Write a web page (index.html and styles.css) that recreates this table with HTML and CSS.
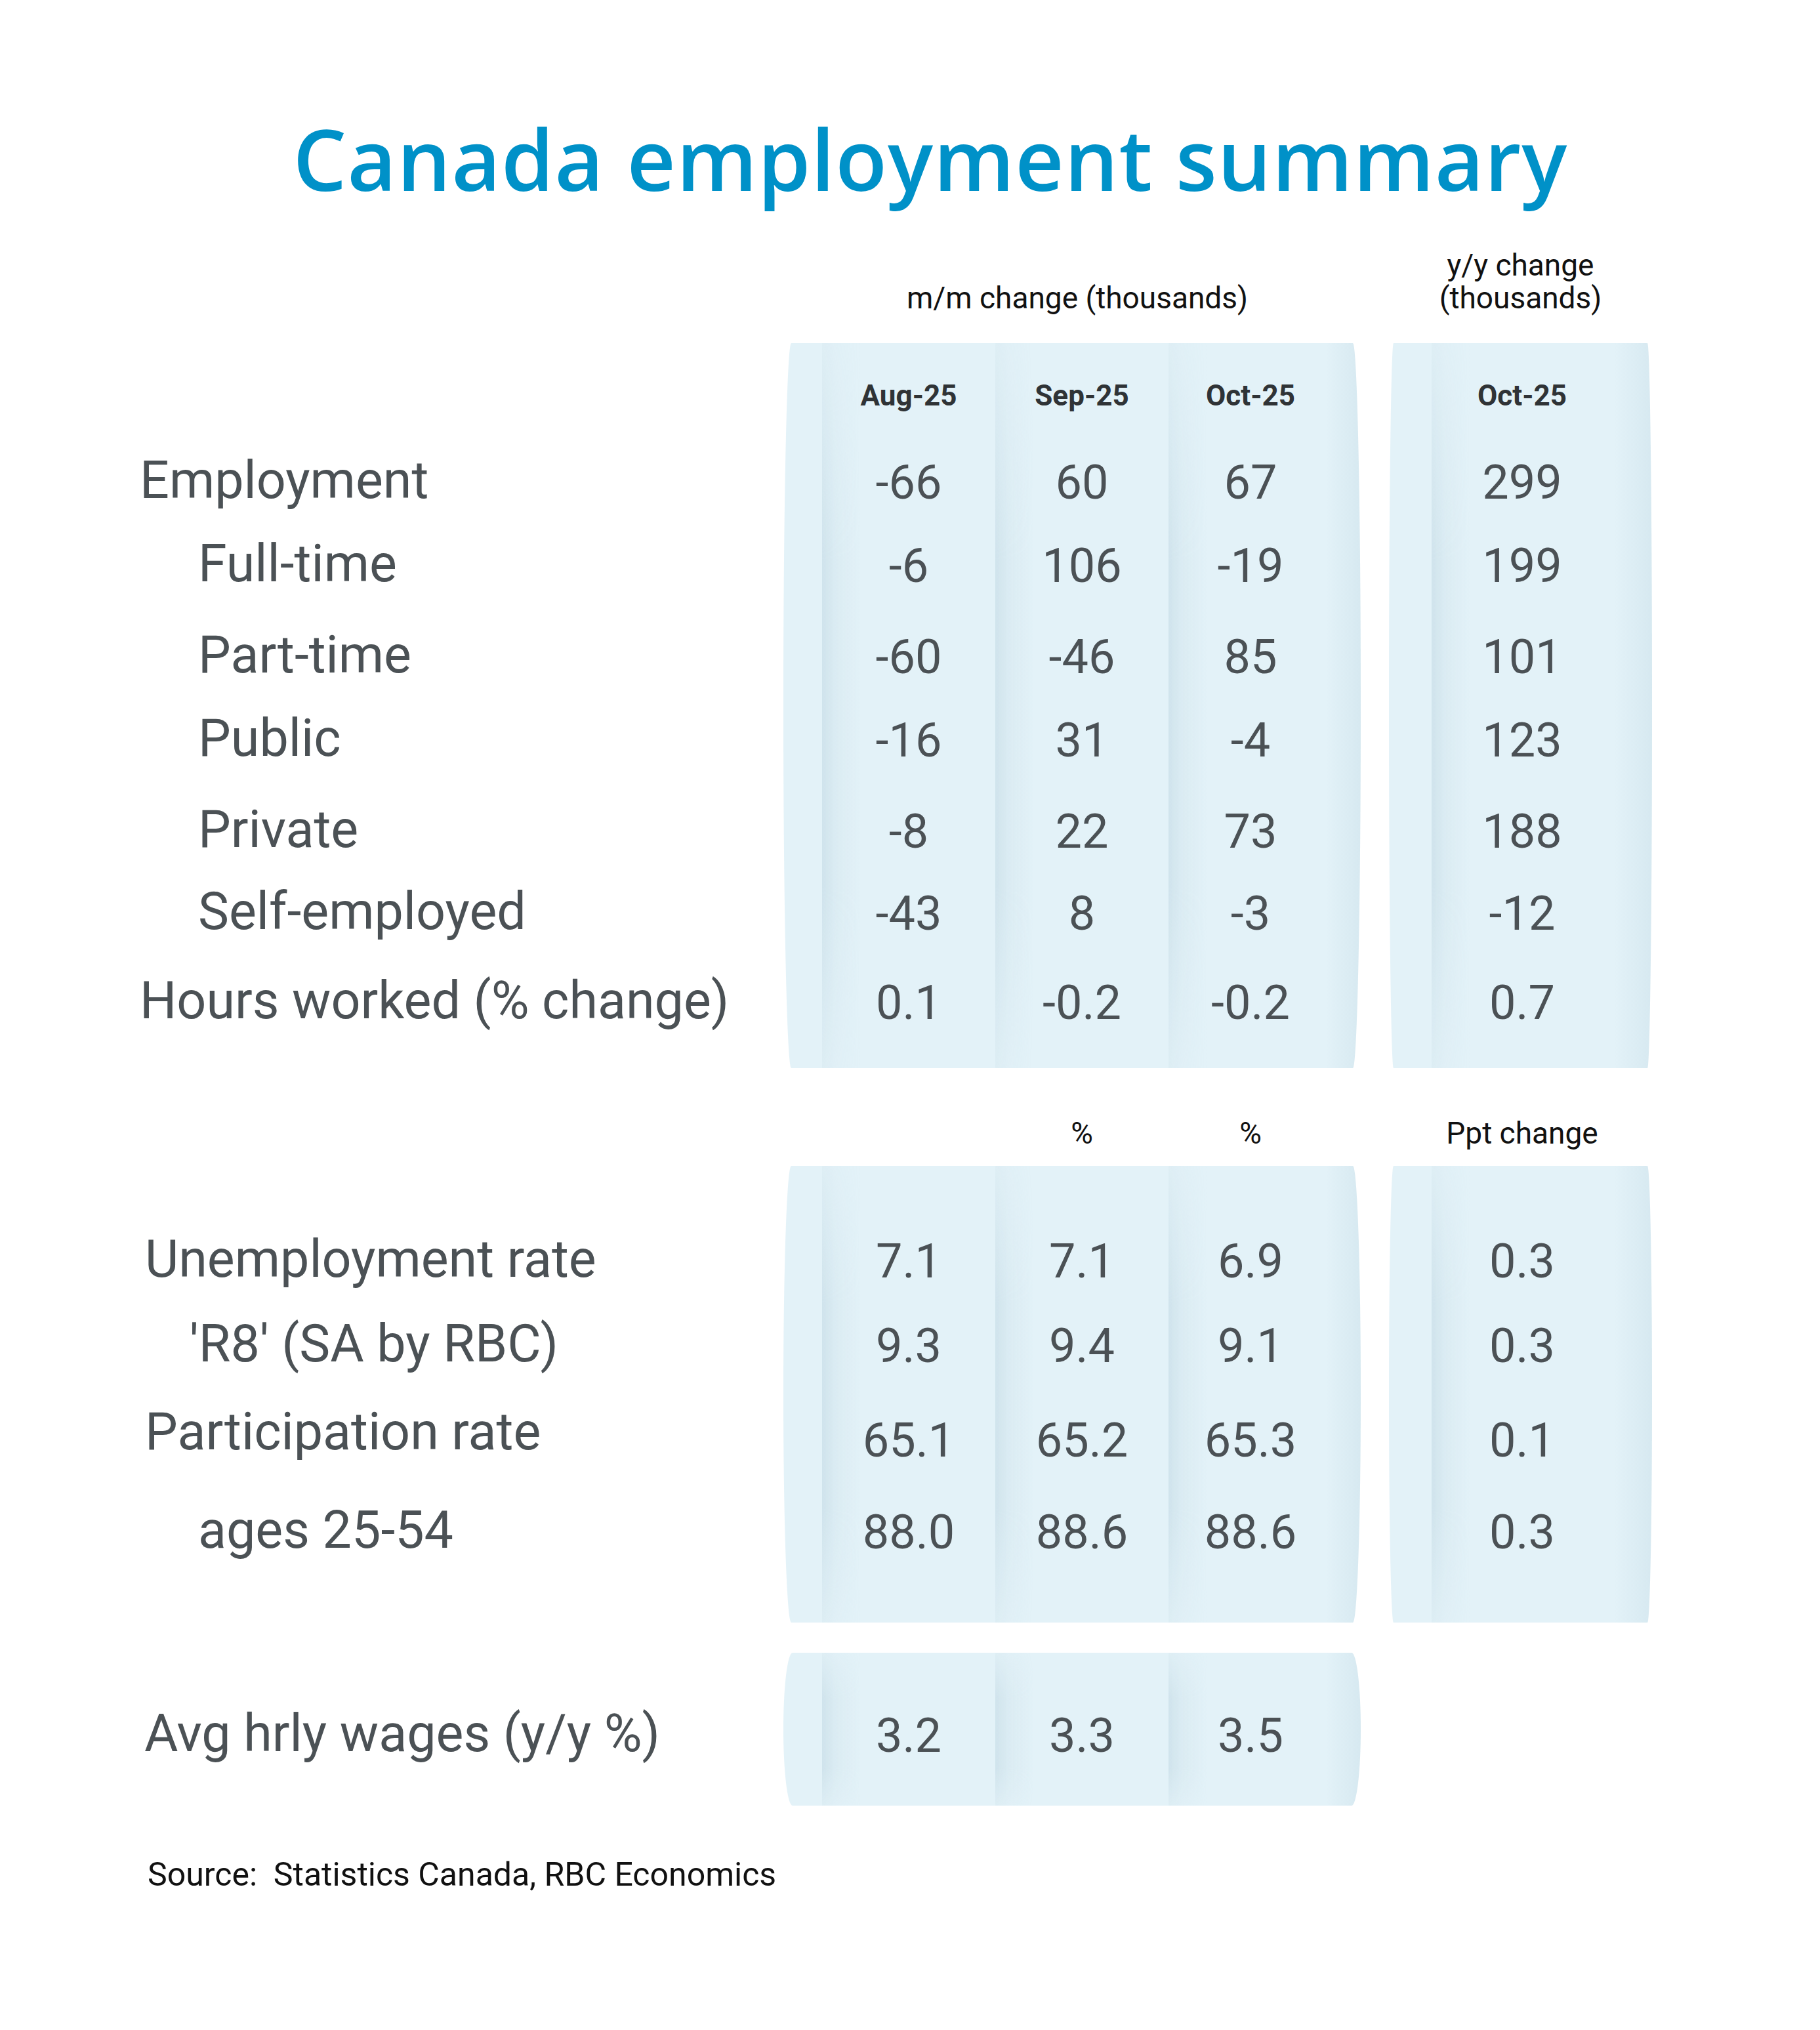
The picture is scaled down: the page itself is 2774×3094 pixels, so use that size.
FILE: index.html
```html
<!DOCTYPE html>
<html lang="en">
<head>
<meta charset="utf-8">
<title>Canada employment summary</title>
<link rel="stylesheet" href="styles.css">
</head>
<body>
<main class="page">
  <h1 class="title">Canada employment summary</h1>

  <section class="grid sec1">
    <div class="panel p-mm r-s1"></div>
    <div class="shade c1 r-s1"></div>
    <div class="shade c2 r-s1"></div>
    <div class="shade c3 r-s1"></div>
    <div class="panel p-yy r-s1"></div>
    <div class="shade c4 r-s1"></div>

    <div class="hdr h-mm">m/m change (thousands)</div>
    <div class="hdr h-yy">y/y change<br>(thousands)</div>

    <div class="mon c1 row2">Aug-25</div>
    <div class="mon c2 row2">Sep-25</div>
    <div class="mon c3 row2">Oct-25</div>
    <div class="mon c4 row2">Oct-25</div>

    <div class="lab main row3">Employment</div>
    <div class="num c1 row3">-66</div><div class="num c2 row3">60</div><div class="num c3 row3">67</div><div class="num c4 row3">299</div>

    <div class="lab sub row4">Full-time</div>
    <div class="num c1 row4">-6</div><div class="num c2 row4">106</div><div class="num c3 row4">-19</div><div class="num c4 row4">199</div>

    <div class="lab sub row5">Part-time</div>
    <div class="num c1 row5">-60</div><div class="num c2 row5">-46</div><div class="num c3 row5">85</div><div class="num c4 row5">101</div>

    <div class="lab sub row6">Public</div>
    <div class="num c1 row6">-16</div><div class="num c2 row6">31</div><div class="num c3 row6">-4</div><div class="num c4 row6">123</div>

    <div class="lab sub row7">Private</div>
    <div class="num c1 row7">-8</div><div class="num c2 row7">22</div><div class="num c3 row7">73</div><div class="num c4 row7">188</div>

    <div class="lab sub row8">Self-employed</div>
    <div class="num c1 row8">-43</div><div class="num c2 row8">8</div><div class="num c3 row8">-3</div><div class="num c4 row8">-12</div>

    <div class="lab main row9">Hours worked (% change)</div>
    <div class="num c1 row9">0.1</div><div class="num c2 row9">-0.2</div><div class="num c3 row9">-0.2</div><div class="num c4 row9">0.7</div>
  </section>

  <section class="grid sec2">
    <div class="panel p-mm r-s2"></div>
    <div class="shade c1 r-s2"></div>
    <div class="shade c2 r-s2"></div>
    <div class="shade c3 r-s2"></div>
    <div class="panel p-yy r-s2"></div>
    <div class="shade c4 r-s2"></div>

    <div class="unit c2 row1">%</div>
    <div class="unit c3 row1">%</div>
    <div class="unit c4 row1">Ppt change</div>

    <div class="lab main2 row2">Unemployment rate</div>
    <div class="num c1 row2">7.1</div><div class="num c2 row2">7.1</div><div class="num c3 row2">6.9</div><div class="num c4 row2">0.3</div>

    <div class="lab r8 row3">'R8' (SA by RBC)</div>
    <div class="num c1 row3">9.3</div><div class="num c2 row3">9.4</div><div class="num c3 row3">9.1</div><div class="num c4 row3">0.3</div>

    <div class="lab main2 raised row4">Participation rate</div>
    <div class="num c1 row4">65.1</div><div class="num c2 row4">65.2</div><div class="num c3 row4">65.3</div><div class="num c4 row4">0.1</div>

    <div class="lab ages row5">ages 25-54</div>
    <div class="num c1 row5">88.0</div><div class="num c2 row5">88.6</div><div class="num c3 row5">88.6</div><div class="num c4 row5">0.3</div>
  </section>

  <section class="grid sec3">
    <div class="panel p-wg r-s3"></div>
    <div class="shade c1 r-s3"></div>
    <div class="shade c2 r-s3"></div>
    <div class="shade c3 r-s3"></div>

    <div class="lab wage row1">Avg hrly wages (y/y %)</div>
    <div class="num c1 row1">3.2</div><div class="num c2 row1">3.3</div><div class="num c3 row1">3.5</div>
  </section>

  <p class="source">Source:&nbsp; Statistics Canada, RBC Economics</p>
</main>
</body>
</html>
```

FILE: styles.css
```css
html, body {
  margin: 0;
  padding: 0;
  background: #ffffff;
}

.page {
  width: 2774px;
  height: 3094px;
  font-family: Roboto, "Liberation Sans", Arial, sans-serif;
  color: #4b5155;
}

.title {
  margin: 0;
  padding: 177px 0 0 62px;
  font-family: "Open Sans", "Noto Sans", sans-serif;
  font-weight: 600;
  font-size: 129px;
  line-height: 1;
  letter-spacing: 1px;
  color: #0091c8;
  text-align: center;
}

.grid {
  display: grid;
  grid-template-columns: 1194px 59px 264px 264px 250px 43px 43px 65px 276px 60px 1fr;
}

.sec1 { grid-template-rows: 217px 102px 147px 127px 139px 127px 139px 125px 136px 63px; }
.sec2 { grid-template-rows: 149px 182px 129px 144px 140px 101px; }
.sec3 { grid-template-rows: 163px 70px; margin-top: 46px; }

.r-s1 { grid-row: 2 / 11; }
.r-s2 { grid-row: 2 / 7; }
.r-s3 { grid-row: 1 / 3; }

.row1 { grid-row: 1; }
.row2 { grid-row: 2; }
.row3 { grid-row: 3; }
.row4 { grid-row: 4; }
.row5 { grid-row: 5; }
.row6 { grid-row: 6; }
.row7 { grid-row: 7; }
.row8 { grid-row: 8; }
.row9 { grid-row: 9; }

.c1 { grid-column: 3; }
.c2 { grid-column: 4; }
.c3 { grid-column: 5; }
.c4 { grid-column: 9; }

/* panels */
.panel {
  background-color: #e3f2f8;
}
.p-mm {
  grid-column: 2 / 7;
  border-radius: 12px / 50%;
  background-image: linear-gradient(to left, rgba(170, 200, 214, 0.22), rgba(170, 200, 214, 0) 54px);
}
.p-yy {
  grid-column: 8 / 11;
  border-radius: 7px / 50%;
  background-image: linear-gradient(to left, rgba(170, 200, 214, 0.22), rgba(170, 200, 214, 0) 58px);
}
.p-wg {
  grid-column: 2 / 7;
  border-radius: 14px / 50%;
  background-image: linear-gradient(to left, rgba(170, 200, 214, 0.22), rgba(170, 200, 214, 0) 54px);
}

.shade {
  background-image: linear-gradient(to right, rgba(165, 195, 210, 0.30) 0, rgba(165, 195, 210, 0.12) 22px, rgba(165, 195, 210, 0) 60px);
  -webkit-mask-image: linear-gradient(to bottom, rgba(0,0,0,0.25) 0, #000 30%, #000 75%, rgba(0,0,0,0.3) 100%);
  mask-image: linear-gradient(to bottom, rgba(0,0,0,0.25) 0, #000 30%, #000 75%, rgba(0,0,0,0.3) 100%);
}

/* header text */
.hdr {
  grid-row: 1;
  align-self: end;
  text-align: center;
  font-size: 46px;
  color: #111111;
}
.h-mm {
  grid-column: 3 / 6;
  line-height: 1;
  margin-bottom: 46px;
}
.h-yy {
  grid-column: 8 / 11;
  line-height: 50px;
  margin-bottom: 44px;
}

.unit {
  align-self: end;
  text-align: center;
  font-size: 46px;
  line-height: 1;
  color: #111111;
  margin-bottom: 27px;
}

.mon {
  align-self: end;
  text-align: center;
  font-size: 44px;
  font-weight: 700;
  line-height: 1;
  color: #2f3336;
}

.lab {
  grid-column: 1;
  align-self: end;
  font-size: 79px;
  line-height: 1;
  white-space: nowrap;
}
.main { padding-left: 213px; }
.sub { padding-left: 302px; }
.main2 { padding-left: 221px; }
.r8 { padding-left: 289px; }
.ages { padding-left: 302px; }
.wage { padding-left: 220px; }
.raised { margin-bottom: 10px; }

.num {
  align-self: end;
  text-align: center;
  font-size: 72px;
  line-height: 1;
}

.source {
  margin: 80px 0 0 0;
  padding-left: 225px;
  font-size: 50px;
  line-height: 1;
  color: #111111;
}
```
